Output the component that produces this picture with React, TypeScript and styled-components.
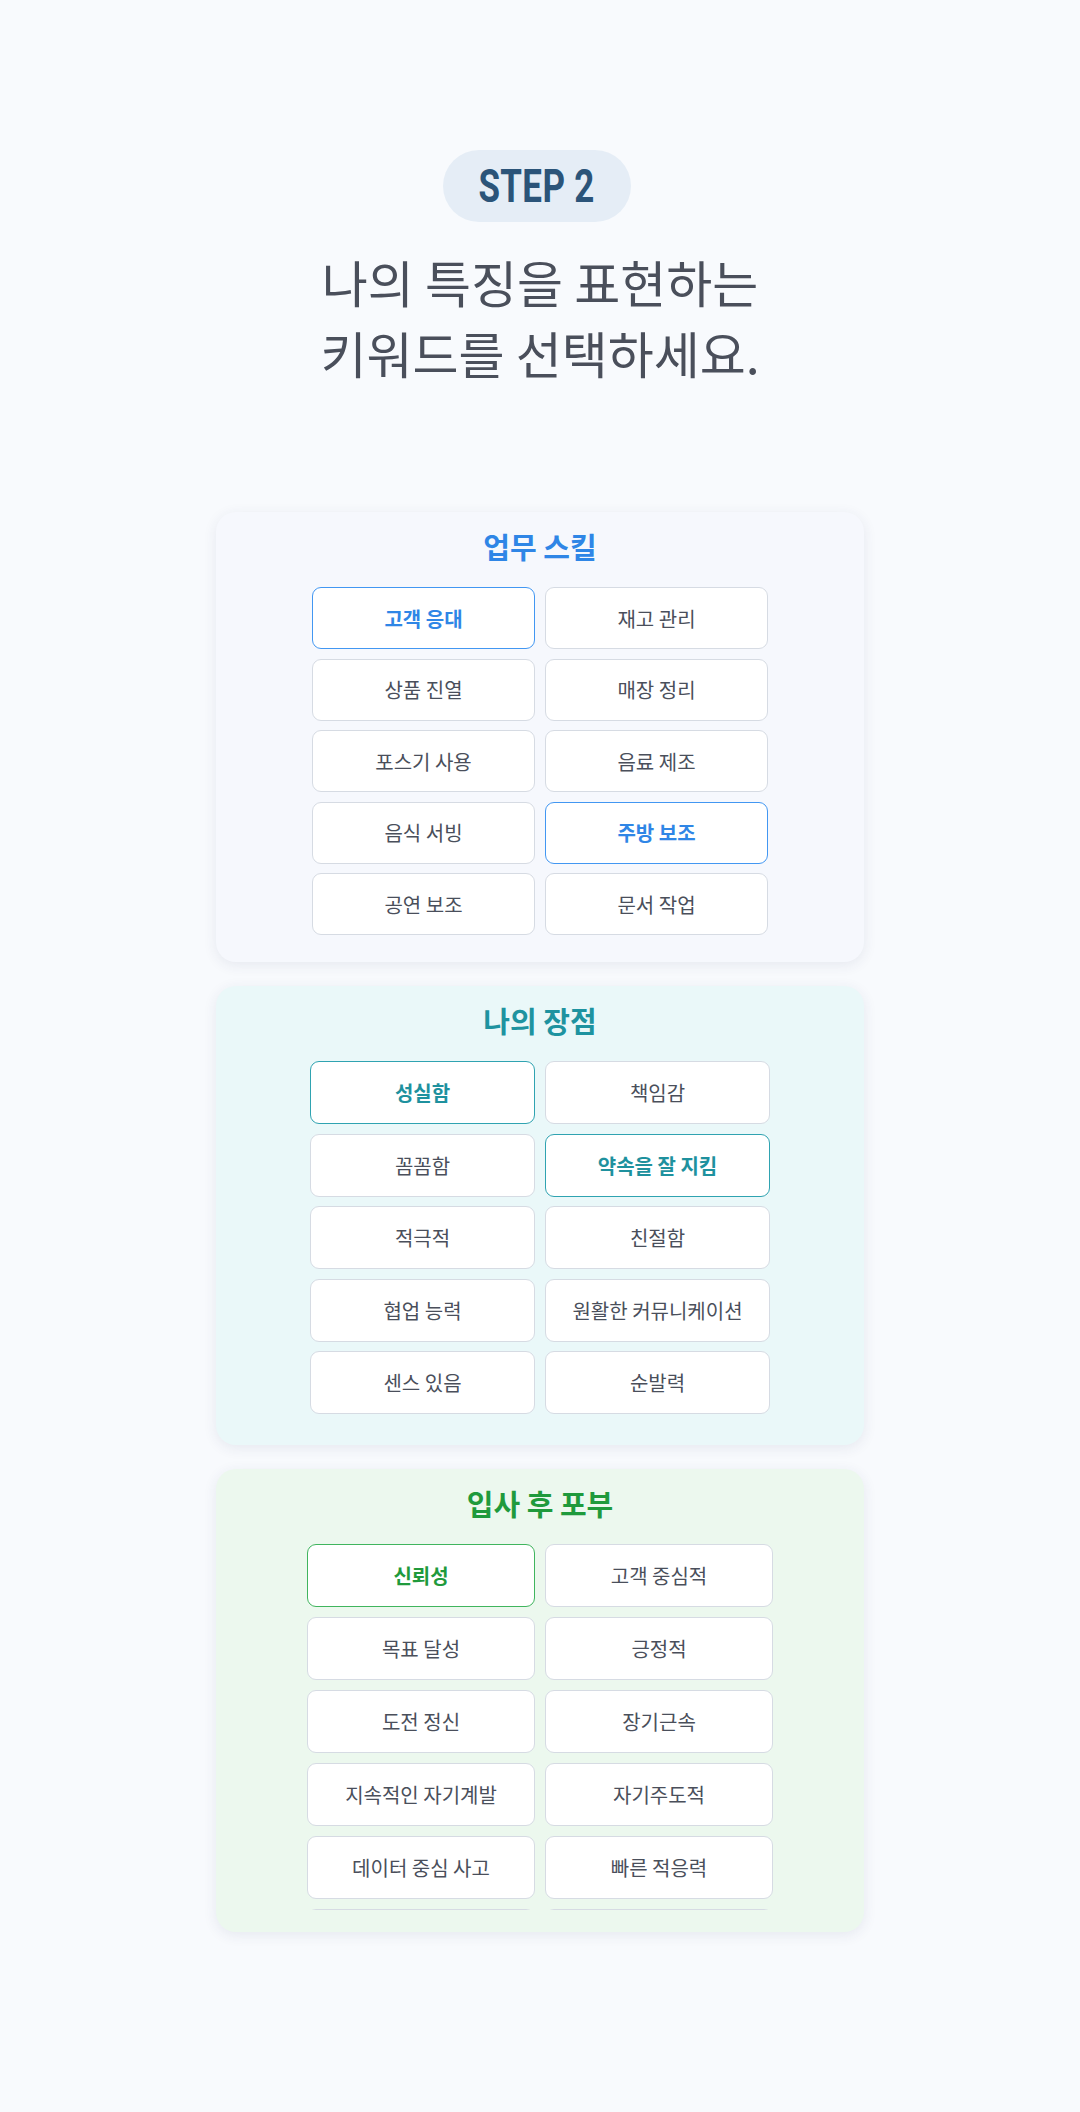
import React from "react";
import styled, { createGlobalStyle } from "styled-components";

const GlobalStyle = createGlobalStyle`
  * { box-sizing: border-box; }
  body {
    margin: 0;
    background: #f8fafd;
    font-family: "Noto Sans CJK KR", "Noto Sans", sans-serif;
  }
`;

const sections = [
  {
    title: "업무 스킬",
    tone: "blue",
    col: 223,
    row: 62,
    gap: 9.5,
    pad: 27,
    clip: 0,
    items: [
      ["고객 응대", true],
      ["재고 관리", false],
      ["상품 진열", false],
      ["매장 정리", false],
      ["포스기 사용", false],
      ["음료 제조", false],
      ["음식 서빙", false],
      ["주방 보조", true],
      ["공연 보조", false],
      ["문서 작업", false],
    ],
  },
  {
    title: "나의 장점",
    tone: "teal",
    col: 225,
    row: 63,
    gap: 9.5,
    pad: 31,
    clip: 0,
    items: [
      ["성실함", true],
      ["책임감", false],
      ["꼼꼼함", false],
      ["약속을 잘 지킴", true],
      ["적극적", false],
      ["친절함", false],
      ["협업 능력", false],
      ["원활한 커뮤니케이션", false],
      ["센스 있음", false],
      ["순발력", false],
    ],
  },
  {
    title: "입사 후 포부",
    tone: "green",
    col: 228,
    row: 63,
    gap: 10,
    pad: 22,
    clip: 366,
    items: [
      ["신뢰성", true],
      ["고객 중심적", false],
      ["목표 달성", false],
      ["긍정적", false],
      ["도전 정신", false],
      ["장기근속", false],
      ["지속적인 자기계발", false],
      ["자기주도적", false],
      ["데이터 중심 사고", false],
      ["빠른 적응력", false],
      ["", false],
      ["", false],
    ],
  },
] as const;

const tones = {
  blue: { bg: "#f6f8fd", title: "#2f86e6", border: "#4297f2", text: "#2f86e6" },
  teal: { bg: "#eaf8f9", title: "#1e93a0", border: "#2fa3b1", text: "#1e919e" },
  green: { bg: "#ecf8ee", title: "#1f9a3c", border: "#40b55e", text: "#1f9a3c" },
};

type Tone = keyof typeof tones;

const Page = styled.main`
  min-height: 2112px;
  padding: 150px 0 180px;
  display: flex;
  flex-direction: column;
  align-items: center;
`;

const StepPill = styled.div`
  width: 188px;
  height: 72px;
  border-radius: 36px;
  background: #e5edf6;
  display: flex;
  align-items: center;
  justify-content: center;
  margin-left: -6px;
`;

const StepText = styled.span`
  display: inline-block;
  font-family: Roboto, "Liberation Sans", sans-serif;
  font-weight: 700;
  font-size: 46px;
  color: #2b5479;
  transform: scaleX(0.76);
  letter-spacing: 0.5px;
`;

const Heading = styled.h1`
  margin: 24px 0 124px;
  font-size: 50px;
  line-height: 71px;
  font-weight: 400;
  color: #4a4f5b;
  text-align: center;
  letter-spacing: 0;
`;

const Stack = styled.div`
  display: flex;
  flex-direction: column;
  gap: 24px;
`;

const Card = styled.section<{ $tone: Tone; $pad: number }>`
  width: 648px;
  padding: 14px 0 ${(p) => p.$pad}px;
  border-radius: 20px;
  background: ${(p) => tones[p.$tone].bg};
  box-shadow: 0 3px 14px rgba(40, 60, 100, 0.09);
  display: flex;
  flex-direction: column;
  align-items: center;
`;

const Title = styled.h2<{ $tone: Tone }>`
  margin: 0 0 21px;
  font-size: 29px;
  line-height: 40px;
  font-weight: 700;
  letter-spacing: 0;
  color: ${(p) => tones[p.$tone].title};
`;

const Scroller = styled.div<{ $clip: number }>`
  max-height: ${(p) => (p.$clip ? `${p.$clip}px` : "none")};
  overflow: hidden;
`;

const Grid = styled.div<{ $col: number; $row: number; $gap: number }>`
  display: grid;
  grid-template-columns: repeat(2, ${(p) => p.$col}px);
  grid-auto-rows: ${(p) => p.$row}px;
  row-gap: ${(p) => p.$gap}px;
  column-gap: 10px;
`;

const Chip = styled.button<{ $tone: Tone; $on: boolean }>`
  height: 100%;
  border-radius: 9px;
  background: #ffffff;
  border: ${(p) => (p.$on ? `1.6px solid ${tones[p.$tone].border}` : "1.4px solid #d6dbe3")};
  color: ${(p) => (p.$on ? tones[p.$tone].text : "#4a4f5b")};
  font-family: "Noto Sans CJK KR", "Noto Sans", sans-serif;
  font-size: 20px;
  font-weight: ${(p) => (p.$on ? 700 : 400)};
  letter-spacing: 0;
  padding: 0 8px;
  display: flex;
  align-items: center;
  justify-content: center;
`;

export default function App() {
  return (
    <>
      <GlobalStyle />
      <Page>
        <StepPill>
          <StepText>STEP 2</StepText>
        </StepPill>
        <Heading>
          나의 특징을 표현하는
          <br />
          키워드를 선택하세요.
        </Heading>
        <Stack>
          {sections.map((s) => (
            <Card key={s.title} $tone={s.tone} $pad={s.pad}>
              <Title $tone={s.tone}>{s.title}</Title>
              <Scroller $clip={s.clip}>
                <Grid $col={s.col} $row={s.row} $gap={s.gap}>
                  {s.items.map(([label, on], i) => (
                    <Chip key={i} $tone={s.tone} $on={on}>
                      {label}
                    </Chip>
                  ))}
                </Grid>
              </Scroller>
            </Card>
          ))}
        </Stack>
      </Page>
    </>
  );
}
